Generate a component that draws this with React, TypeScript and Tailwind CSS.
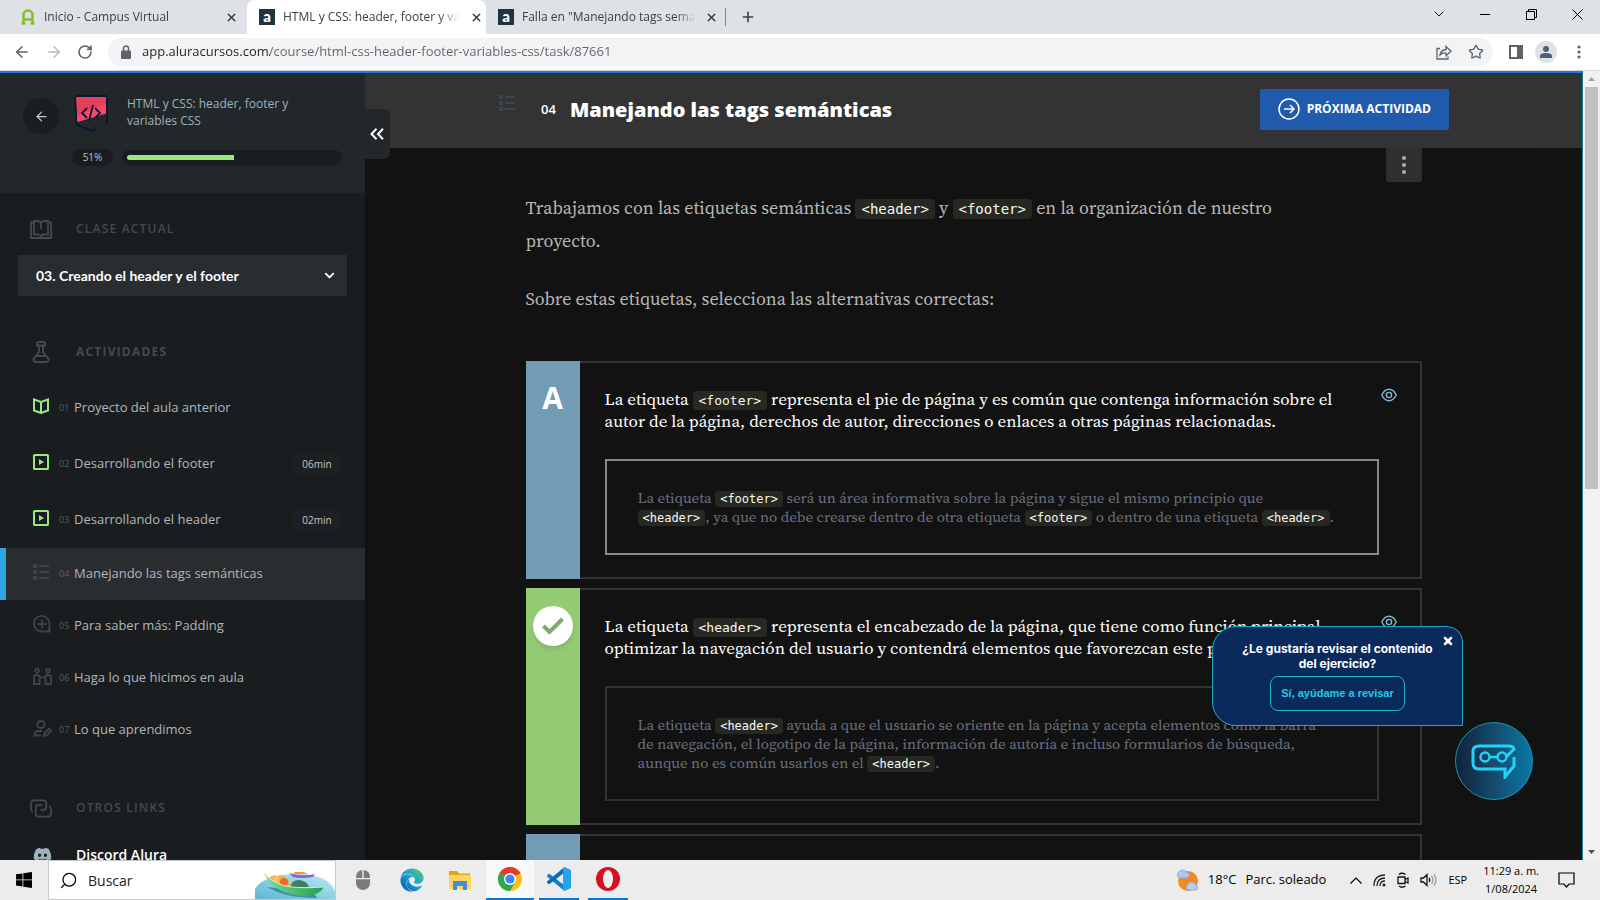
import type { ReactNode } from "react";
import { FaDiscord, FaEdge } from "react-icons/fa";
import { ArrowLeft, ArrowRight, ChevronDown, RotateCw, Plus, X, Search, Star } from "lucide-react";

const tabs = [
  { title: "Inicio - Campus Virtual", icon: "campus", active: false },
  { title: "HTML y CSS: header, footer y va", icon: "alura", active: true },
  { title: "Falla en \"Manejando tags sema", icon: "alura", active: false },
];

const activities = [
  { num: "01", title: "Proyecto del aula anterior", icon: "book", row: "h-14" },
  { num: "02", title: "Desarrollando el footer", icon: "video", row: "h-14", time: "06min" },
  { num: "03", title: "Desarrollando el header", icon: "video", row: "h-14", time: "02min" },
  { num: "04", title: "Manejando las tags semánticas", icon: "list", row: "h-13", current: true },
  { num: "05", title: "Para saber más: Padding", icon: "plus", row: "h-13" },
  { num: "06", title: "Haga lo que hicimos en aula", icon: "people", row: "h-13" },
  { num: "07", title: "Lo que aprendimos", icon: "edit", row: "h-13" },
];

function ListIcon() {
  return (
    <svg width="16" height="16" viewBox="0 0 16 16" fill="#3d464d">
      <path d="M0 0h4v4H0zM0 6h4v4H0zM0 12h4v4H0zM6 1h10v2H6zM6 7h10v2H6zM6 13h10v2H6z" />
    </svg>
  );
}

function ActivityIcon({ name }: { name: string }) {
  if (name === "book") {
    return (
      <svg width="16" height="16" viewBox="0 0 16 16" fill="none" stroke="#9be77d" strokeWidth="2">
        <path d="M1 1.500 8 4l7-2.500V12.500L8 15l-7-2.500zM8 4v11" />
      </svg>
    );
  }
  if (name === "video") {
    return (
      <svg width="16" height="16" viewBox="0 0 16 16" fill="none" stroke="#9be77d" strokeWidth="2">
        <rect x="1" y="1" width="14" height="14" rx="0.500" />
        <path d="M6 5v6l5-3z" fill="#9be77d" stroke="none" />
      </svg>
    );
  }
  if (name === "list") return <ListIcon />;
  if (name === "plus") {
    return (
      <svg width="18" height="18" viewBox="0 0 18 18" fill="none" stroke="#3d464d" strokeWidth="1.800">
        <path d="M16.500 16.500H9A7.800 7.800 0 1 1 16.500 9zM9 4.500v9M4.500 9h9" />
        <path d="M17 13v4h-4z" fill="#3d464d" stroke="none" />
      </svg>
    );
  }
  if (name === "people") {
    return (
      <svg width="19" height="17" viewBox="0 0 19 17" fill="none" stroke="#3d464d" strokeWidth="1.800">
        <circle cx="4" cy="2.800" r="1.900" />
        <circle cx="15" cy="2.800" r="1.900" />
        <path d="M6.500 10.500v5.500H1V9.500Q1 7 3.500 7H5l2.500 2.500H9M12.500 10.500v5.500H18V9.500Q18 7 15.500 7H14l-2.500 2.500H10" />
      </svg>
    );
  }
  return (
    <svg width="19" height="17" viewBox="0 0 19 17" fill="none" stroke="#3d464d" strokeWidth="1.900">
      <circle cx="8" cy="4.500" r="3.500" />
      <path d="M8 15.500H1.500Q1.500 11 6 11h3M11 15.800l.5-2.500 4.500-4.500 2 2-4.500 4.500z" />
    </svg>
  );
}

function AluraFavicon() {
  return (
    <span className="flex size-4 items-center justify-center bg-[#1e3440] pb-[2px] font-['Lato',sans-serif] text-[15px] leading-4 font-black text-white">
      a
    </span>
  );
}

function CampusFavicon() {
  return (
    <svg width="14" height="16" viewBox="0 0 14 16" fill="none" stroke="#85c12b" strokeWidth="2.600">
      <path d="M2.500 15.500V6a4.500 4.500 0 0 1 9 0v9.500M2.500 10.500h9" />
      <path d="M0.500 14.600h4M9.500 14.600h4" strokeWidth="2" />
    </svg>
  );
}

function TabStrip() {
  return (
    <div className="flex h-[34px] items-stretch bg-[#dee1e6] text-[12px] text-[#3c4043]">
      <div className="flex pl-2">
        {tabs.map((tab) => (
          <div
            key={tab.title}
            className={`flex w-[239px] items-center gap-2 pr-2 pl-3 ${tab.active ? "rounded-t-lg bg-white" : ""}`}
          >
            <span className="flex w-4 shrink-0 justify-center">
              {tab.icon === "campus" ? <CampusFavicon /> : <AluraFavicon />}
            </span>
            <a href="#" className="flex-1 whitespace-nowrap [mask-image:linear-gradient(90deg,#000_88%,transparent)]">
              {tab.title}
            </a>
            <button type="button" aria-label="Cerrar pestaña" className="flex w-4 shrink-0 justify-center">
              <X size={13} strokeWidth={2.8} />
            </button>
          </div>
        ))}
      </div>
      <div className="flex items-center gap-3.5">
        <span className="h-[18px] w-px bg-[#80868b]" />
        <button type="button" aria-label="Nueva pestaña">
          <Plus size={16} strokeWidth={2.4} />
        </button>
      </div>
      <div className="ml-auto flex pb-1.5 text-black">
        <button type="button" aria-label="Buscar pestañas" className="flex w-[46px] items-center justify-center">
          <ChevronDown size={16} strokeWidth={1.4} />
        </button>
        <button type="button" aria-label="Minimizar" className="flex w-[46px] items-center justify-center">
          <span className="h-px w-[10px] bg-black" />
        </button>
        <button type="button" aria-label="Restaurar" className="flex w-[46px] items-center justify-center">
          <svg width="11" height="11" viewBox="0 0 11 11" fill="none" stroke="#000">
            <path d="M.5 2.500h8v8h-8zM2.500 2.500v-2h8v8h-2" />
          </svg>
        </button>
        <button type="button" aria-label="Cerrar" className="flex w-[46px] items-center justify-center">
          <svg width="11" height="11" viewBox="0 0 11 11" stroke="#000">
            <path d="M.5.5l10 10M10.500.5l-10 10" />
          </svg>
        </button>
      </div>
    </div>
  );
}

function Toolbar() {
  return (
    <div className="flex h-[37px] items-center border-b border-[#d5d8dc] bg-white pr-[11px] pl-[13px] text-[#5f6368]">
      <div className="flex w-[95px] items-center gap-3.5">
        <button type="button" aria-label="Atrás"><ArrowLeft size={18} /></button>
        <button type="button" aria-label="Adelante" className="text-[#babcbe]"><ArrowRight size={18} /></button>
        <button type="button" aria-label="Recargar"><RotateCw size={16} strokeWidth={2.4} /></button>
      </div>
      <div className="flex h-7 flex-1 items-center rounded-full bg-[#f1f3f4] pr-[9px] pl-3">
        <svg width="12" height="14" viewBox="0 0 12 14" fill="#5f6368">
          <path d="M2 5.500h8q1 0 1 1V13q0 1-1 1H2q-1 0-1-1V6.500q0-1 1-1z" />
          <path d="M3.500 6V3.500a2.500 2.500 0 0 1 5 0V6" fill="none" stroke="#5f6368" strokeWidth="1.500" />
        </svg>
        <input
          type="text"
          aria-label="Dirección"
          defaultValue="app.aluracursos.com/course/html-css-header-footer-variables-css/task/87661"
          className="ml-2.5 flex-1 bg-[linear-gradient(90deg,#202124_128px,#5f6368_128px)] bg-clip-text text-[13px] text-transparent outline-none"
        />
        <div className="flex items-center gap-4">
          <button type="button" aria-label="Compartir">
            <svg width="16" height="16" viewBox="0 0 16 16" fill="none" stroke="#5f6368" strokeWidth="1.300">
              <path d="M4 4.500H1v10.500h11v-2.500M4 11q1-5 6-5.500V2.500l5 4.700-5 4.500V9Q6.500 8.700 4 11z" />
            </svg>
          </button>
          <button type="button" aria-label="Marcador"><Star size={16} strokeWidth={2} /></button>
        </div>
      </div>
      <div className="flex items-center gap-3 pl-4">
        <button type="button" aria-label="Panel lateral">
          <svg width="14" height="14" viewBox="0 0 14 14" fill="none" stroke="#5f6368" strokeWidth="2">
            <path d="M1 1h12v12H1z" />
            <path d="M8 0h6v14H8z" fill="#5f6368" stroke="none" />
          </svg>
        </button>
        <button type="button" aria-label="Perfil" className="flex size-[22px] items-center justify-center rounded-full bg-[#dee1e6]">
          <svg width="14" height="14" viewBox="0 0 14 14" fill="#4e5d78">
            <circle cx="7" cy="4" r="3" />
            <path d="M1 13v-2q0-3 6-3t6 3v2z" />
          </svg>
        </button>
        <button type="button" aria-label="Menú" className="px-2">
          <svg width="4" height="14" viewBox="0 0 4 14" fill="#5f6368">
            <circle cx="2" cy="2" r="1.600" />
            <circle cx="2" cy="7" r="1.600" />
            <circle cx="2" cy="12" r="1.600" />
          </svg>
        </button>
      </div>
    </div>
  );
}

function SectionTitle({ icon, weight = "font-semibold", children }: { icon: ReactNode; weight?: string; children: ReactNode }) {
  return (
    <h2 className={`flex h-9 items-center gap-6 pl-[30px] text-[12px] tracking-widest text-[#414b50] ${weight}`}>
      <span className="flex w-[22px] justify-center">{icon}</span>
      {children}
    </h2>
  );
}

function Sidebar() {
  return (
    <aside className="w-[365px] shrink-0 overflow-hidden bg-[#191d1f] font-['Open_Sans',sans-serif]">
      <header className="h-[120px] bg-[#22272a] px-[23px] pt-[22px]">
        <div className="flex items-start">
          <button type="button" aria-label="Volver" className="mt-[3px] flex size-9 items-center justify-center rounded-full bg-[#1a1e20] text-[#c3cbd0]">
            <ArrowLeft size={15} strokeWidth={2} />
          </button>
          <svg className="ml-[15px]" width="34" height="37" viewBox="0 0 34 37" fill="none">
            <path d="M2 2h30v16.500L3 27z" fill="#e63f5c" />
            <path d="M32 9v9.500L3 27l-.5-6z" fill="#ff4568" />
            <path d="M33 29V3q0-2-2-2H3Q1 1 1 3l1.500 26.500L18 36l5-2" stroke="#051933" strokeWidth="1.800" />
            <path d="M13 13l-5 5 5 5M21 13l5 5-5 5M19 10l-4 16" stroke="#051933" strokeWidth="1.800" />
          </svg>
          <p className="ml-[19px] text-[12px] leading-[17px] text-[#9fb1bb]">
            HTML y CSS: header, footer y<br />variables CSS
          </p>
        </div>
        <div className="mt-[15px] flex items-center gap-[9px] pl-[49px]">
          <span className="flex h-[17px] w-[41px] items-center justify-center rounded-full bg-[#191d1f] text-[10px] text-[#b6c2c9]">51%</span>
          <div className="h-[15px] flex-1 rounded-full bg-[#191d1f] px-[5px] py-[5px]">
            <div className="h-[5px] w-[51%] rounded-l-full bg-[#9be77d]" />
          </div>
        </div>
      </header>

      <div className="pt-[18px]">
        <SectionTitle
          icon={
            <svg width="22" height="19" viewBox="0 0 22 19" fill="none" stroke="#414b50" strokeWidth="1.800">
              <path d="M4 2.500H1V18h20V2.500h-3M4 1h4.500L11 2.500 13.500 1H18v13.500h-5L11 16l-2-1.500H4zM11 2.500V9" />
            </svg>
          }
        >
          CLASE ACTUAL
        </SectionTitle>
        <div className="mx-[18px] mt-2 grid items-center">
          <select
            aria-label="Clase actual"
            className="col-start-1 row-start-1 h-[41px] w-full appearance-none bg-[#292d2f] px-[18px] font-['Lato',sans-serif] text-[14px] font-bold text-white"
          >
            <option>03. Creando el header y el footer</option>
          </select>
          <ChevronDown className="pointer-events-none col-start-1 row-start-1 mr-2.5 justify-self-end text-white" size={15} strokeWidth={3} />
        </div>
      </div>

      <nav className="pt-[38px]">
        <SectionTitle
          weight="font-bold"
          icon={
            <svg width="18" height="22" viewBox="0 0 18 22" fill="none" stroke="#414b50" strokeWidth="1.900">
              <path d="M5 1h8M5 1v3.500h8V1M7 4.500V11L1.500 18Q1 21 4 21h10q3 0 2.500-3L11 11V4.500M4 15h10" />
            </svg>
          }
        >
          ACTIVIDADES
        </SectionTitle>
        <ul className="mt-2.5">
          {activities.map((item) => (
            <li key={item.num}>
              <a
                href="#"
                className={`flex items-center border-l-[6px] pr-6 pl-[27px] ${item.row} ${
                  item.current ? "border-[#30a5e5] bg-[#292d30]" : "border-transparent"
                }`}
              >
                <span className="flex w-[26px] pb-1"><ActivityIcon name={item.icon} /></span>
                <span className="w-[15px] text-[9px] text-[#555e63]">{item.num}</span>
                <span className="text-[13px] text-[#b3b6b8]">{item.title}</span>
                {item.time && (
                  <span className="ml-auto flex h-6 w-12 items-center justify-center rounded-xs bg-[#1d2022] text-[10px] text-[#c1c4c6]">
                    {item.time}
                  </span>
                )}
              </a>
            </li>
          ))}
        </ul>
      </nav>

      <div className="pt-[34px]">
        <SectionTitle
          icon={
            <svg width="23" height="19" viewBox="0 0 23 19" fill="none" stroke="#414b50" strokeWidth="1.700">
              <path d="M3 13Q1 12 1 10V4q0-3 3-3h10q3 0 3 3v4q0 3-3 3h-3" />
              <path d="M20 7q2 1 2 3v5q0 3-3 3H9q-3 0-3-3V9q0-3 3-3h4" />
            </svg>
          }
        >
          OTROS LINKS
        </SectionTitle>
        <a href="#" className="mt-2.5 flex h-9 items-center gap-6 pl-[33px] text-[14px] font-semibold text-white">
          <FaDiscord size={19} color="#9fb1bb" />
          Discord Alura
        </a>
      </div>
    </aside>
  );
}

type CodeSize = "lg" | "md" | "sm";

const codeSizes: Record<CodeSize, string> = {
  lg: "text-[14px] px-[6px] py-[2px]",
  md: "text-[13px] px-[6px] py-[2px]",
  sm: "text-[12px] px-[5px] py-px",
};

function Tag({ name, size }: { name: string; size: CodeSize }) {
  return (
    <code className={`rounded-sm bg-[#272822] font-['DejaVu_Sans_Mono',monospace] leading-none text-[#f8f8f2] ${codeSizes[size]}`}>
      {`<${name}>`}
    </code>
  );
}

function EyeIcon() {
  return (
    <svg width="16" height="14" viewBox="0 0 16 14" fill="none" stroke="#84b9d4" strokeWidth="1.400">
      <path d="M.8 7Q3.500 1.300 8 1.300T15.200 7Q12.500 12.700 8 12.700T.8 7z" />
      <circle cx="8" cy="7" r="2.600" />
    </svg>
  );
}

function Option({ mark, correct, title, children }: { mark: ReactNode; correct?: boolean; title: ReactNode; children: ReactNode }) {
  return (
    <li className="flex">
      <div className={`flex w-[54px] shrink-0 justify-center ${correct ? "bg-[#93cb75]" : "bg-[#719cb4]"}`}>{mark}</div>
      <div className="min-w-0 flex-1 border-2 border-l-0 border-[#333] pt-[25px] pr-[23px] pb-[22px] pl-[25px]">
        <div className="flex items-start justify-between">
          <p className="text-[17px] leading-[22px] text-white">{title}</p>
          <button type="button" aria-label="Ver explicación"><EyeIcon /></button>
        </div>
        <div className={`mt-[27px] mr-[18px] border-2 px-[31px] py-[27px] text-[15px] leading-[19px] text-[#6b6f7d] ${correct ? "border-[#2c3826]" : "border-[#888]"}`}>
          {children}
        </div>
      </div>
    </li>
  );
}

function Activity() {
  return (
    <main className="min-w-0 flex-1 overflow-hidden bg-[linear-gradient(90deg,#121212_96%,#111514)]">
      <header className="flex h-[75px] bg-[#333] pr-[133px] pl-[134px] font-['Open_Sans',sans-serif] text-white">
        <span className="mt-[22px]"><ListIcon /></span>
        <div className="ml-[26px] flex items-center gap-3.5 pb-[2px]">
          <span className="text-[13px] font-semibold">04</span>
          <h1 className="text-[20px] font-extrabold">Manejando las tags semánticas</h1>
        </div>
        <button type="button" className="mt-4 ml-auto flex h-[41px] items-center gap-[7px] rounded-xs bg-[#205bad] px-[18px] pb-[2px] text-[12px] font-bold">
          <svg width="22" height="22" viewBox="0 0 22 22" fill="none" stroke="#fff" strokeWidth="1.500">
            <circle cx="11" cy="11" r="10" />
            <path d="M6 11h10M12 7l4 4-4 4" />
          </svg>
          PRÓXIMA ACTIVIDAD
        </button>
      </header>

      <div className="mx-auto max-w-4xl font-['Source_Serif_4','Liberation_Serif',serif]">
        <div className="flex justify-end">
          <button type="button" aria-label="Más opciones" className="flex h-[34px] w-9 items-center justify-center rounded-b-xs bg-[#2f2f2f]">
            <svg width="4" height="18" viewBox="0 0 4 18" fill="#9fb1bb">
              <circle cx="2" cy="2" r="2" />
              <circle cx="2" cy="9" r="2" />
              <circle cx="2" cy="16" r="2" />
            </svg>
          </button>
        </div>
        <div className="mt-[9px] text-[18px] leading-[33px] text-[#b7b7b7]">
          <p>
            Trabajamos con las etiquetas semánticas <Tag name="header" size="lg" /> y <Tag name="footer" size="lg" /> en la organización de nuestro
            <br />
            proyecto.
          </p>
          <p className="mt-[25px]">Sobre estas etiquetas, selecciona las alternativas correctas:</p>
        </div>

        <ul className="mt-[46px] space-y-[9px]">
          <Option
            mark={<span className="mt-[19px] font-['Open_Sans',sans-serif] text-[30px] leading-9 font-bold text-white">A</span>}
            title={
              <>
                La etiqueta <Tag name="footer" size="md" /> representa el pie de página y es común que contenga información sobre el
                <br />
                autor de la página, derechos de autor, direcciones o enlaces a otras páginas relacionadas.
              </>
            }
          >
            La etiqueta <Tag name="footer" size="sm" /> será un área informativa sobre la página y sigue el mismo principio que
            <br />
            <Tag name="header" size="sm" />, ya que no debe crearse dentro de otra etiqueta <Tag name="footer" size="sm" /> o dentro de una etiqueta{" "}
            <Tag name="header" size="sm" />.
          </Option>
          <Option
            correct
            mark={
              <span className="mt-[18px] flex size-10 items-center justify-center rounded-full bg-white shadow-md">
                <svg width="24" height="20" viewBox="0 0 24 20" fill="none" stroke="#7cab70" strokeWidth="4">
                  <path d="M2.500 10l6 6L21.500 3" />
                </svg>
              </span>
            }
            title={
              <>
                La etiqueta <Tag name="header" size="md" /> representa el encabezado de la página, que tiene como función principal
                <br />
                optimizar la navegación del usuario y contendrá elementos que favorezcan este proceso.
              </>
            }
          >
            La etiqueta <Tag name="header" size="sm" /> ayuda a que el usuario se oriente en la página y acepta elementos como la barra
            <br />
            de navegación, el logotipo de la página, información de autoría e incluso formularios de búsqueda,
            <br />
            aunque no es común usarlos en el <Tag name="header" size="sm" />.
          </Option>
          <li className="flex h-[100px]">
            <div className="w-[54px] bg-[#719cb4]" />
            <div className="flex-1 border-2 border-l-0 border-[#333]" />
          </li>
        </ul>
      </div>
    </main>
  );
}

function Assistant() {
  return (
    <div className="absolute right-[49px] bottom-[60px] flex flex-col items-end">
      <div className="relative mr-[70px] w-[251px] rounded-tl-3xl rounded-tr-2xl rounded-bl-3xl border border-[#1fa9c4] bg-[#0a2a5c] pt-3.5 pb-3.5 text-center font-['Inter',sans-serif] text-[12px] leading-[15px] font-bold text-white">
        <button type="button" aria-label="Cerrar" className="absolute top-2 right-2">
          <X size={12} strokeWidth={5} />
        </button>
        <p>¿Le gustaría revisar el contenido<br />del ejercicio?</p>
        <button type="button" className="mt-[5px] h-[35px] rounded-lg border border-[#1fb2cc] px-2.5 font-['Liberation_Sans',sans-serif] text-[11px] text-[#22cbe6]">
          Sí, ayúdame a revisar
        </button>
      </div>
      <button type="button" aria-label="Asistente" className="-mt-1 flex size-[78px] items-center justify-center rounded-full border border-[#1b93ab] bg-linear-to-r from-[#10233c] to-[#0479a5]">
        <svg width="46" height="36" viewBox="0 0 46 36" fill="none" stroke="#22d3f5" strokeWidth="2.500">
          <path d="M35 14l8-8q-1-3-5-3H8Q2 3 2 8v12q0 6 6 6h26v8l9-11v-9" strokeWidth="3" />
          <circle cx="14" cy="14" r="4.500" />
          <circle cx="31" cy="14" r="4.500" />
          <path d="M18 14h9" />
        </svg>
      </button>
    </div>
  );
}

function PageScrollbar() {
  return (
    <div className="flex w-[18px] shrink-0 flex-col items-center border-l border-[#177d94] bg-[#f1f1f1]">
      <svg className="my-1.5" width="7" height="4" viewBox="0 0 7 4" fill="#a3a3a3"><path d="M0 4l3.500-4L7 4z" /></svg>
      <div className="h-[402px] w-[13px] bg-[#c1c1c1]" />
      <svg className="mt-auto mb-1.5" width="7" height="4" viewBox="0 0 7 4" fill="#505050"><path d="M0 0l3.500 4L7 0z" /></svg>
    </div>
  );
}

function Boats() {
  return (
    <svg width="80" height="38" viewBox="0 0 80 38">
      <defs>
        <linearGradient id="sea" x1="0" y1="1" x2="1" y2="0">
          <stop offset="0" stopColor="#5fb5d3" />
          <stop offset="1" stopColor="#b9ecf5" />
        </linearGradient>
        <linearGradient id="hull" x1="0" x2="1">
          <stop offset="0" stopColor="#7fd9a0" />
          <stop offset="1" stopColor="#1f9e4a" />
        </linearGradient>
      </defs>
      <path d="M0 38V28Q8 14 40 13T80 30V38z" fill="url(#sea)" />
      <path d="M12 26q20 12 50 11l-4-6z" fill="#3c93ad" />
      <path d="M34 12q12 4 26 1l-2 3q-12 2-20 0z" fill="#9360c4" />
      <path d="M38 13q2-3 6-2 4-1 9 2z" fill="#f79a28" />
      <path d="M14 17q4-4 9-2 5-2 8 2l6 8-12-1z" fill="#f4b23c" />
      <circle cx="29" cy="21" r="4" fill="#f0672a" />
      <circle cx="21" cy="18" r="3" fill="#f7c766" />
      <path d="M36 26q0-7 8-7 9 1 10 8z" fill="#3f7d62" />
      <path d="M9 12q6 8 18 12t42 2q-5 9-20 9Q18 33 9 12z" fill="url(#hull)" />
      <path d="M9 12q6 8 18 12t42 2" fill="none" stroke="#c5f0b4" strokeWidth="1.200" />
    </svg>
  );
}

function ChromeIcon() {
  return (
    <svg width="24" height="24" viewBox="0 0 24 24">
      <circle cx="12" cy="12" r="12" fill="#fbc116" />
      <path d="M12 12L1.600 6A12 12 0 0 1 22.400 6z" fill="#e33b2e" />
      <path d="M12 12L1.600 6A12 12 0 0 0 12 24l5.200-9z" fill="#2da94f" />
      <path d="M12 6h10.400L17.200 9z" fill="#e33b2e" />
      <circle cx="12" cy="12" r="6" fill="#fff" />
      <circle cx="12" cy="12" r="4.600" fill="#4285f4" />
    </svg>
  );
}

function WeatherIcon() {
  return (
    <svg width="24" height="23" viewBox="0 0 24 23">
      <circle cx="13" cy="12" r="10" fill="#f58a1f" />
      <path d="M4 9a3.500 3.500 0 0 1 0-6 4 4 0 0 1 7 0 3 3 0 0 1 1 6z" fill="#a9c6f5" stroke="#7c9fe0" strokeWidth=".8" />
      <path d="M13 21a3 3 0 0 1 0-5.500 4 4 0 0 1 7.500 0 3 3 0 0 1 .5 5.500z" fill="#b5cef8" stroke="#7c9fe0" strokeWidth=".8" />
    </svg>
  );
}

function Taskbar() {
  return (
    <footer className="flex h-10 shrink-0 items-stretch bg-[#ececec] text-black">
      <button type="button" aria-label="Inicio" className="flex w-12 items-center justify-center">
        <svg width="16" height="16" viewBox="0 0 16 16" fill="#000">
          <path d="M0 2.300l6.500-.9v6.100H0zM7.300 1.300L16 0v7.500H7.300zM0 8.300h6.500v6.200L0 13.600zM7.300 8.300H16V16l-8.700-1.200z" />
        </svg>
      </button>
      <label className="flex w-72 items-center border border-[#c8c8c8] bg-white pl-2.5">
        <Search size={19} strokeWidth={1.6} className="-scale-x-100" />
        <input type="text" aria-label="Buscar" placeholder="Buscar" className="ml-2.5 min-w-0 flex-1 text-[14px] outline-none placeholder:text-[#222]" />
        <Boats />
      </label>
      <div className="flex">
        <button type="button" aria-label="Mouse" className="ml-[5px] flex w-11 items-center justify-center">
          <svg width="14" height="20" viewBox="0 0 14 20" fill="#7b7b7b">
            <path d="M0 8V7q0-6 6.300-7v8zM7.700 0Q14 1 14 7v1H7.700zM0 9.300h14V13a7 7 0 0 1-14 0z" />
          </svg>
        </button>
        <button type="button" aria-label="Edge" className="ml-[3px] flex w-12 items-center justify-center">
          <svg width="0" height="0">
            <defs>
              <linearGradient id="edge" x1="0" y1="1" x2="1" y2="0">
                <stop offset="0" stopColor="#0b4fa0" />
                <stop offset=".5" stopColor="#1b9de0" />
                <stop offset="1" stopColor="#5fd35a" />
              </linearGradient>
            </defs>
          </svg>
          <FaEdge size={24} fill="url(#edge)" />
        </button>
        <button type="button" aria-label="Explorador" className="flex w-12 items-center justify-center">
          <svg width="22" height="19" viewBox="0 0 22 19">
            <path d="M0 0h8l2 2.500h11V18H0z" fill="#e5a50f" />
            <path d="M0 4h22v14H0z" fill="#fdd55f" />
            <path d="M4 19v-9h14v9h-4v-4H8v4z" fill="#3f8fd6" />
          </svg>
        </button>
        <button type="button" aria-label="Chrome" className="ml-[2px] flex w-12 items-center justify-center border-b-2 border-[#0078d7] bg-[#f8f8f8]">
          <ChromeIcon />
        </button>
        <button type="button" aria-label="Visual Studio Code" className="ml-[5px] flex w-10 items-center justify-center border-b-2 border-[#0078d7]">
          <svg width="24" height="24" viewBox="0 0 24 24">
            <path d="M0 8.500l2-2 15.500 12V24L0 9.500z" fill="#0f80cc" />
            <path d="M0 15.500l2 2L17.500 5.500V0L0 14.500z" fill="#0a6cb5" />
            <path d="M17.500 0L24 3v18l-6.500 3-1.500-1V1z" fill="#27a3ee" />
          </svg>
        </button>
        <button type="button" aria-label="Opera" className="ml-[9px] flex w-10 items-center justify-center border-b-2 border-[#0078d7]">
          <svg width="24" height="24" viewBox="0 0 24 24">
            <circle cx="12" cy="12" r="12" fill="#d9101f" />
            <ellipse cx="12" cy="12" rx="5" ry="9" fill="#f0f0f0" />
          </svg>
        </button>
      </div>

      <div className="ml-auto flex items-center text-[13px]">
        <WeatherIcon />
        <span className="ml-[9px]">18°C</span>
        <span className="ml-[9px]">Parc. soleado</span>
        <div className="ml-6 flex items-center gap-[11px]">
          <svg width="12" height="7" viewBox="0 0 12 7" fill="none" stroke="#000" strokeWidth="1.200"><path d="M.5 6.500L6 1l5.500 5.500" /></svg>
          <svg width="13" height="13" viewBox="0 0 13 13" fill="none" stroke="#222" strokeWidth="1.300">
            <path d="M1 12Q1 1 12 1M4 12q0-8 8-8M7 12q0-5 5-5" />
            <circle cx="11" cy="11" r="1.500" fill="#222" stroke="none" />
          </svg>
          <svg width="12" height="16" viewBox="0 0 12 16" fill="none" stroke="#111" strokeWidth="1.300">
            <path d="M1 5h7v6.500H1zM8 7.500l3-1.500v5L8 9.500M2 2.500Q5 0 8.500 2.500M2 14q3 2.500 6.500 0" />
          </svg>
          <svg width="17" height="14" viewBox="0 0 17 14" fill="none" stroke="#111" strokeWidth="1.300">
            <path d="M1 5h2.500L7 1.500v11L3.500 9H1zM9 5q1.500 2 0 4" />
            <path d="M11.500 3q3 4 0 8M14 1.500q4 5.500 0 11" stroke="#999" />
          </svg>
          <span className="text-[11px]">ESP</span>
        </div>
        <div className="ml-4 text-center text-[11px] leading-[18px]">
          <p>11:29 a. m.</p>
          <p>1/08/2024</p>
        </div>
        <button type="button" aria-label="Notificaciones" className="ml-[19px] mr-[25px]">
          <svg width="17" height="16" viewBox="0 0 17 16" fill="none" stroke="#000" strokeWidth="1.200">
            <path d="M1 1h15v11h-5l-2.500 3L6 12H1z" />
          </svg>
        </button>
      </div>
    </footer>
  );
}

export default function App() {
  return (
    <div className="flex h-screen flex-col overflow-hidden font-['Open_Sans',sans-serif]">
      <TabStrip />
      <Toolbar />
      <div className="flex min-h-0 flex-1">
        <div className="relative flex min-w-0 flex-1 border-t-2 border-[#2577dc]">
          <Sidebar />
          <button
            type="button"
            aria-label="Ocultar menú"
            className="absolute top-9 left-[365px] flex h-[50px] w-[25px] items-center justify-center rounded-r-md bg-[#22272a] pr-[2px]"
          >
            <svg width="14" height="12" viewBox="0 0 14 12" fill="none" stroke="#fff" strokeWidth="2">
              <path d="M6.500.7L1.500 6l5 5.300M13 .7L8 6l5 5.300" />
            </svg>
          </button>
          <Activity />
          <Assistant />
        </div>
        <PageScrollbar />
      </div>
      <Taskbar />
    </div>
  );
}
